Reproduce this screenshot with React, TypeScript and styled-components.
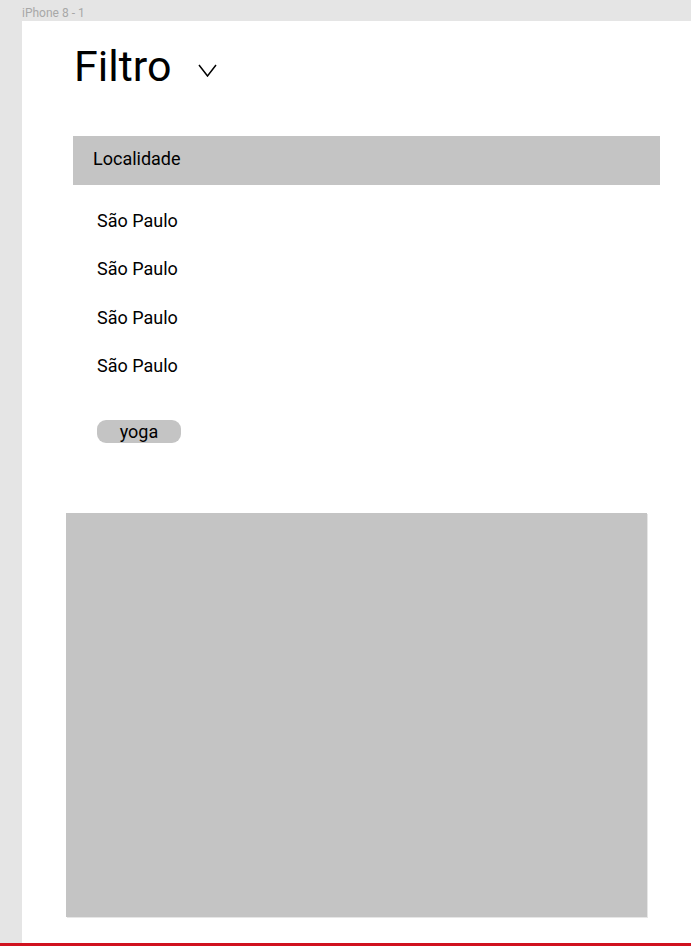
import React from "react";
import styled, { createGlobalStyle } from "styled-components";

const GlobalStyle = createGlobalStyle`
  html, body {
    margin: 0;
    padding: 0;
    background: #e5e5e5;
    font-family: Roboto, "Liberation Sans", Arial, sans-serif;
  }
  * { box-sizing: border-box; }
`;

const Page = styled.div`
  width: 691px;
  height: 946px;
  display: flex;
  flex-direction: column;
  background: #e5e5e5;
  overflow: hidden;
`;

const FrameLabel = styled.div`
  height: 21px;
  padding: 6px 0 0 22px;
  font-size: 12px;
  line-height: 14px;
  color: #a8a8a8;
`;

const FrameRow = styled.div`
  flex: 1;
  display: flex;
  padding-left: 22px;
`;

const Frame = styled.main`
  flex: 1;
  background: #ffffff;
  display: flex;
  flex-direction: column;
  align-items: flex-start;
`;

const BottomBar = styled.div`
  height: 3px;
  background: #d0121f;
`;

const Header = styled.header`
  margin: 19px 0 0 52px;
  display: flex;
  align-items: center;
  gap: 27px;
`;

const Title = styled.h1`
  margin: 0;
  font-size: 43px;
  line-height: 52px;
  font-weight: 400;
  color: #000;
`;

const Chevron = styled.svg`
  width: 19px;
  height: 13px;
  margin-top: 8px;
`;

const SectionBar = styled.div`
  margin: 44px 0 0 51px;
  width: 587px;
  height: 49px;
  padding: 12px 0 0 20px;
  background: #c4c4c4;
  font-size: 18px;
  line-height: 21px;
  color: #000;
`;

const List = styled.ul`
  list-style: none;
  margin: 25px 0 0 75px;
  padding: 0;
  display: flex;
  flex-direction: column;
  gap: 27.4px;
`;

const Item = styled.li`
  font-size: 18px;
  line-height: 21px;
  color: #000;
`;

const Tag = styled.span`
  margin: 44px 0 0 75px;
  width: 84px;
  height: 23px;
  padding-bottom: 1px;
  border-radius: 9px;
  background: #c4c4c4;
  display: flex;
  align-items: center;
  justify-content: center;
  font-size: 18px;
  line-height: 21px;
  color: #000;
`;

const Placeholder = styled.div`
  margin: 70px 0 0 44px;
  width: 581px;
  height: 404px;
  background: #c4c4c4;
  box-shadow: 1px 1px 0 #e6e6e6;
`;

const cities = ["São Paulo", "São Paulo", "São Paulo", "São Paulo"];

export default function App() {
  return (
    <>
      <GlobalStyle />
      <Page>
        <FrameLabel>iPhone 8 - 1</FrameLabel>
        <FrameRow>
          <Frame>
            <Header>
              <Title>Filtro</Title>
              <Chevron viewBox="0 0 19 13" fill="none">
                <polyline
                  points="1,1 9.5,12 18,1"
                  stroke="#000"
                  strokeWidth="1.5"
                  strokeLinejoin="miter"
                />
              </Chevron>
            </Header>
            <SectionBar>Localidade</SectionBar>
            <List>
              {cities.map((c, i) => (
                <Item key={i}>{c}</Item>
              ))}
            </List>
            <Tag>yoga</Tag>
            <Placeholder />
          </Frame>
        </FrameRow>
        <BottomBar />
      </Page>
    </>
  );
}
